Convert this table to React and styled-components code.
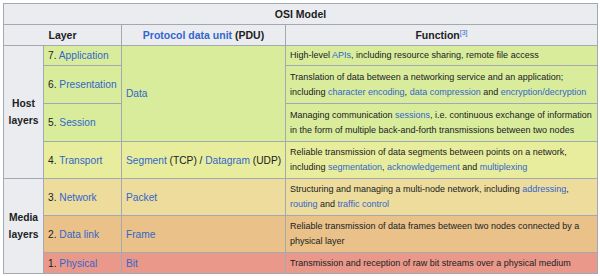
import React from "react";
import styled, { createGlobalStyle } from "styled-components";

const GlobalStyle = createGlobalStyle`
  html, body {
    margin: 0;
    background: #ffffff;
  }
  body {
    padding: 3px;
    font-family: "Liberation Sans", Arial, sans-serif;
    color: #202122;
  }
`;

const Table = styled.table`
  border-collapse: collapse;
  table-layout: fixed;
  width: 595px;
  border: 1px solid #a2a9b1;
  font-size: 10.2px;
  line-height: 15px;
`;

const Row = styled.tr`
  height: ${(p) => p.$h}px;
  background: ${(p) => p.$bg || "transparent"};
`;

const Title = styled.th`
  background: #eaecf0;
  border: 1px solid #a2a9b1;
  font-size: 10.5px;
  font-weight: bold;
  text-align: center;
  padding: 0 4px;
`;

const HeadCell = styled(Title)``;

const SideCell = styled.th`
  background: #eaecf0;
  border: 1px solid #a2a9b1;
  font-size: 10.3px;
  font-weight: bold;
  text-align: center;
  vertical-align: middle;
  padding: 0 2px;
  line-height: 17px;
`;

const Cell = styled.td`
  border: 1px solid #a2a9b1;
  padding: 0 4px;
  vertical-align: middle;
  background: ${(p) => p.$bg || "transparent"};
  white-space: ${(p) => (p.$nowrap ? "nowrap" : "normal")};
`;

const FuncCell = styled(Cell)`
  font-size: 9px;
  line-height: 15px;
  padding: 0 4px 0 4px;
`;

const Link = styled.a`
  color: #3366cc;
  text-decoration: none;
`;

const Ref = styled.sup`
  font-size: 7px;
  font-weight: normal;
  line-height: 1;
  vertical-align: 4px;
  color: #3366cc;
`;

const layers = [
  { n: 7, name: "Application", bg: "#d8ec9c", h: 20 },
  { n: 6, name: "Presentation", bg: "#d8ec9c", h: 38 },
  { n: 5, name: "Session", bg: "#d8ec9c", h: 38 },
  { n: 4, name: "Transport", bg: "#e7ed9c", h: 37 },
  { n: 3, name: "Network", bg: "#eddc9c", h: 37 },
  { n: 2, name: "Data link", bg: "#e9c189", h: 37 },
  { n: 1, name: "Physical", bg: "#e9988a", h: 21 },
];

const functions = {
  7: (
    <>
      High-level <Link href="#">APIs</Link>, including resource sharing, remote
      file access
    </>
  ),
  6: (
    <>
      Translation of data between a networking service and an application;
      <br />
      including <Link href="#">character encoding</Link>,{" "}
      <Link href="#">data compression</Link> and{" "}
      <Link href="#">encryption/decryption</Link>
    </>
  ),
  5: (
    <>
      Managing communication <Link href="#">sessions</Link>, i.e. continuous
      exchange of information in the form of multiple back-and-forth
      transmissions between two nodes
    </>
  ),
  4: (
    <>
      Reliable transmission of data segments between points on a network,
      including <Link href="#">segmentation</Link>,{" "}
      <Link href="#">acknowledgement</Link> and{" "}
      <Link href="#">multiplexing</Link>
    </>
  ),
  3: (
    <>
      Structuring and managing a multi-node network, including{" "}
      <Link href="#">addressing</Link>, <Link href="#">routing</Link> and{" "}
      <Link href="#">traffic control</Link>
    </>
  ),
  2: (
    <>
      Reliable transmission of data frames between two nodes connected by a
      physical layer
    </>
  ),
  1: <>Transmission and reception of raw bit streams over a physical medium</>,
};

const pdu = {
  7: { text: <Link href="#">Data</Link>, span: 3 },
  4: {
    text: (
      <>
        <Link href="#">Segment</Link> (TCP) / <Link href="#">Datagram</Link>{" "}
        (UDP)
      </>
    ),
    span: 1,
  },
  3: { text: <Link href="#">Packet</Link>, span: 1 },
  2: { text: <Link href="#">Frame</Link>, span: 1 },
  1: { text: <Link href="#">Bit</Link>, span: 1 },
};

const side = {
  7: { label: "Host", span: 4 },
  3: { label: "Media", span: 3 },
};

export default function App() {
  return (
    <>
      <GlobalStyle />
      <Table>
        <colgroup>
          <col style={{ width: 40 }} />
          <col style={{ width: 78 }} />
          <col style={{ width: 164 }} />
          <col style={{ width: 312 }} />
        </colgroup>
        <thead>
          <Row $h={21}>
            <Title colSpan={4}>OSI Model</Title>
          </Row>
          <Row $h={21}>
            <HeadCell colSpan={2}>Layer</HeadCell>
            <HeadCell>
              <Link href="#">Protocol data unit</Link> (PDU)
            </HeadCell>
            <HeadCell>
              Function<Ref>[3]</Ref>
            </HeadCell>
          </Row>
        </thead>
        <tbody>
          {layers.map((l) => (
            <Row key={l.n} $h={l.h} $bg={l.bg}>
              {side[l.n] && (
                <SideCell rowSpan={side[l.n].span}>
                  {side[l.n].label}
                  <br />
                  layers
                </SideCell>
              )}
              <Cell $nowrap>
                {l.n}. <Link href="#">{l.name}</Link>
              </Cell>
              {pdu[l.n] && (
                <Cell $nowrap rowSpan={pdu[l.n].span} $bg={l.bg}>
                  {pdu[l.n].text}
                </Cell>
              )}
              <FuncCell>{functions[l.n]}</FuncCell>
            </Row>
          ))}
        </tbody>
      </Table>
    </>
  );
}
